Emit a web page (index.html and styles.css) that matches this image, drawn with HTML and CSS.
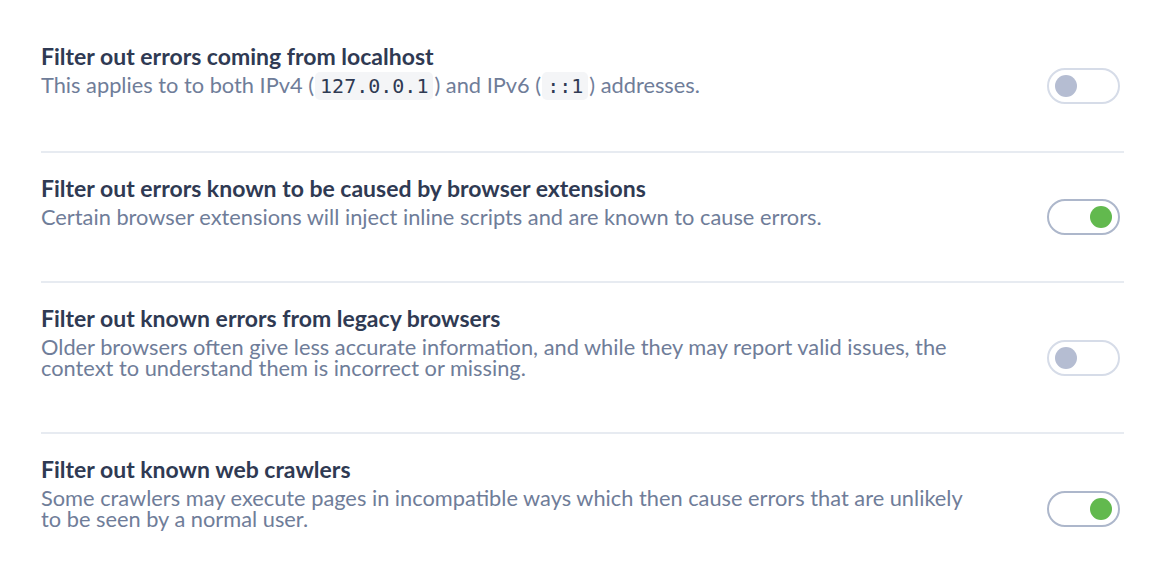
FILE: index.html
```html
<!DOCTYPE html>
<html>
<head>
<meta charset="utf-8">
<link rel="stylesheet" href="styles.css">
</head>
<body>
<div class="list">
  <div class="row">
    <div class="text">
      <div class="title">Filter out errors coming from localhost</div>
      <div class="desc">This applies to to both IPv4 (<code>127.0.0.1</code>) and IPv6 (<code>::1</code>) addresses.</div>
    </div>
    <div class="toggle"><span class="knob"></span></div>
  </div>
  <div class="row">
    <div class="text">
      <div class="title">Filter out errors known to be caused by browser extensions</div>
      <div class="desc">Certain browser extensions will inject inline scripts and are known to cause errors.</div>
    </div>
    <div class="toggle on"><span class="knob"></span></div>
  </div>
  <div class="row">
    <div class="text">
      <div class="title">Filter out known errors from legacy browsers</div>
      <div class="desc">Older browsers often give less accurate information, and while they may report valid issues, the context to understand them is incorrect or missing.</div>
    </div>
    <div class="toggle"><span class="knob"></span></div>
  </div>
  <div class="row last">
    <div class="text">
      <div class="title">Filter out known web crawlers</div>
      <div class="desc">Some crawlers may execute pages in incompatible ways which then cause errors that are unlikely to be seen by a normal user.</div>
    </div>
    <div class="toggle on"><span class="knob"></span></div>
  </div>
</div>
</body>
</html>
```
FILE: styles.css
```css
html, body {
  margin: 0;
  padding: 0;
  background: #ffffff;
}
body {
  font-family: Lato, "Noto Sans", sans-serif;
}
.list {
  padding: 21px 26px 0 41px;
}
.row {
  display: flex;
  align-items: center;
  justify-content: space-between;
  border-bottom: 2px solid #e7ebf1;
  min-height: 128px;
}
.row.last {
  border-bottom: none;
}
.text {
  align-self: flex-start;
  padding: 23px 0 54px;
  max-width: 935px;
}
.title {
  font-size: 23px;
  font-weight: 700;
  line-height: 24px;
  color: #2f3a53;
  margin-bottom: 6px;
}
.desc {
  font-size: 21.8px;
  line-height: 21px;
  color: #6f7d99;
}
code {
  font-family: "DejaVu Sans Mono", monospace;
  font-size: 20px;
  color: #2f3a53;
  background: #f4f5f7;
  border-radius: 5px;
  padding: 2px 5px;
  margin: 0 1px;
}
.toggle {
  box-sizing: border-box;
  width: 73px;
  height: 36px;
  border: 2px solid #d6dce8;
  border-radius: 18px;
  display: flex;
  align-items: center;
  padding: 0 6px;
  margin-right: 4px;
  flex: none;
}
.toggle .knob {
  width: 22px;
  height: 22px;
  border-radius: 50%;
  background: #b5bdd2;
}
.toggle.on {
  border-color: #adb7cb;
  justify-content: flex-end;
}
.toggle.on .knob {
  background: #62b94e;
}
```
